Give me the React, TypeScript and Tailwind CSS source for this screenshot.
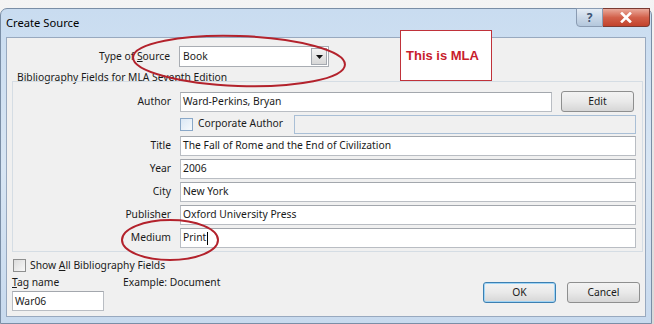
import React from "react";

const font = { fontFamily: '"Noto Sans", "Liberation Sans", sans-serif' };

function TextBox({ value, className = "" }: { value: React.ReactNode; className?: string }) {
  return (
    <div
      className={`h-[20px] bg-white border border-[#b9bdc3] border-t-[#a3a7ad] flex items-center pl-[2px] text-[10.3px] text-[#1a1a1a] ${className}`}
    >
      {value}
    </div>
  );
}

function Row({ label, children }: { label: React.ReactNode; children: React.ReactNode }) {
  return (
    <div className="flex items-center">
      <div className="w-[167px] shrink-0 text-right pr-[9px] text-[10.3px] text-[#1a1a1a]">{label}</div>
      {children}
    </div>
  );
}

function Button({ label, isDefault }: { label: string; isDefault?: boolean }) {
  return (
    <div
      className={`w-[73px] h-[21px] rounded-[3px] border ${
        isDefault ? "border-[#3c7fb1] shadow-[inset_0_0_0_1px_#9fd4f5]" : "border-[#8e8f8f]"
      } bg-gradient-to-b from-[#f3f3f3] via-[#e9e9e9] to-[#d6d6d6] flex items-center justify-center text-[10.3px] text-[#1a1a1a]`}
    >
      {label}
    </div>
  );
}

export default function App() {
  return (
    <div className="w-[654px] h-[324px] relative overflow-hidden bg-gradient-to-b from-[#f4f4f4] to-[#d9d9d9]" style={font}>
      <div className="absolute left-0 right-[2px] top-[8px] bottom-0 rounded-t-[7px] border border-[#7a8ea6] bg-gradient-to-b from-[#c9dcf0] via-[#d8e6f4] to-[#c8daee] flex flex-col">
        {/* Title bar */}
        <div className="h-[28px] flex items-start relative">
          <div className="pl-[5px] pt-[6px] text-[11.2px] text-black">Create Source</div>
          <div className="ml-auto flex mr-[1px] -mt-[1px]">
            <div className="w-[27px] h-[19px] rounded-bl-[4px] border border-[#8a9bb2] bg-gradient-to-b from-[#e4ecf5] via-[#cad8e8] to-[#b4c7dc] flex items-center justify-center text-[12px] font-bold text-[#3e5473]">
              ?
            </div>
            <div className="w-[47px] h-[19px] rounded-br-[4px] border border-l-0 border-[#7a3a32] bg-gradient-to-b from-[#e9a99b] via-[#d2604a] to-[#c2422c] flex items-center justify-center">
              <svg width="12" height="11" viewBox="0 0 12 11">
                <path d="M2 1.5 L10 9.5 M10 1.5 L2 9.5" stroke="#ffffff" strokeWidth="2.6" strokeLinecap="square" />
              </svg>
            </div>
          </div>
        </div>
        {/* Client */}
        <div className="mx-[5px] mb-[6px] flex-1 bg-[#f0f0f0] border border-[#98a9bf] flex flex-col pt-[8px] pl-[5px] pr-[2px]">
          <Row label={<span>Type of <u>S</u>ource</span>}>
            <div className="w-[150px] h-[21px] bg-white border border-[#a9adb3] flex items-center">
              <span className="pl-[3px] text-[10.3px] text-[#1a1a1a] flex-1">Book</span>
              <div className="w-[16px] h-[17px] mr-[1px] border border-[#a4a9b0] bg-gradient-to-b from-[#f4f4f4] to-[#d7d7d7] flex items-center justify-center">
                <svg width="7" height="4" viewBox="0 0 7 4">
                  <path d="M0 0 H7 L3.5 4 Z" fill="#111" />
                </svg>
              </div>
            </div>
          </Row>
          <div className="mt-[3px] pl-[5px] text-[10.3px] text-[#1a1a1a] leading-[14px]">
            Bibliography Fields for MLA Seventh Edition
          </div>
          <div className="-mt-[3px] border border-[#d5dde4] pt-[9px] pb-[3px] flex flex-col gap-[3px] pr-[6px]">
            <Row label="Author">
              <TextBox value="Ward-Perkins, Bryan" className="w-[372px]" />
              <div className="ml-[9px]">
                <Button label="Edit" />
              </div>
            </Row>
            <div className="flex items-center h-[18px]">
              <div className="w-[167px]" />
              <div className="w-[13px] h-[13px] border border-[#8aa8c8] bg-gradient-to-br from-[#dbe8f5] to-[#f6f9fc]" />
              <span className="ml-[5px] text-[10.3px] text-[#1a1a1a]">Corporate Author</span>
              <div className="ml-auto w-[342px] h-[19px] border border-[#a9bfd6] bg-[#f0f0f0]" />
            </div>
            <Row label="Title">
              <TextBox value="The Fall of Rome and the End of Civilization" className="flex-1" />
            </Row>
            <Row label="Year">
              <TextBox value="2006" className="flex-1" />
            </Row>
            <Row label="City">
              <TextBox value="New York" className="flex-1" />
            </Row>
            <Row label="Publisher">
              <TextBox value="Oxford University Press" className="flex-1" />
            </Row>
            <Row label="Medium">
              <TextBox
                value={
                  <span className="flex items-center">
                    Print
                    <span className="inline-block w-[1px] h-[13px] bg-black ml-[1px]" />
                  </span>
                }
                className="flex-1"
              />
            </Row>
          </div>
          <div className="mt-[6px] flex items-center">
            <div className="w-[13px] h-[13px] ml-[1px] border border-[#8e8f8f] bg-gradient-to-br from-[#dcdcdc] to-[#f8f8f8]" />
            <span className="ml-[4px] text-[10.3px] text-[#1a1a1a]">
              Show <u>A</u>ll Bibliography Fields
            </span>
          </div>
          <div className="flex items-start mt-[2px]">
            <div className="flex flex-col">
              <div className="flex text-[10.3px] text-[#1a1a1a] leading-[14px]">
                <span className="w-[111px]">
                  <u>T</u>ag name
                </span>
                <span>Example: Document</span>
              </div>
              <TextBox value="War06" className="w-[92px] mt-[2px]" />
            </div>
            <div className="ml-auto flex gap-[11px] mt-[7px] mr-[3px]">
              <Button label="OK" isDefault />
              <Button label="Cancel" />
            </div>
          </div>
        </div>
      </div>
      {/* Annotation box */}
      <div className="absolute left-[400px] top-[30px] w-[92px] h-[51px] bg-white border border-[#c0323a] flex items-center pl-[5px] text-[13px] font-bold text-[#c8202c]" style={{ fontFamily: '"Liberation Sans", Arial, sans-serif' }}>
        This is MLA
      </div>
      {/* Ellipses */}
      <svg className="absolute inset-0 pointer-events-none" width="654" height="324">
        <ellipse cx="239" cy="61" rx="106" ry="25" fill="none" stroke="#b3222c" strokeWidth="2" transform="rotate(2 239 61)" />
        <ellipse cx="170" cy="240" rx="48" ry="20" fill="none" stroke="#b3222c" strokeWidth="2" />
      </svg>
    </div>
  );
}
